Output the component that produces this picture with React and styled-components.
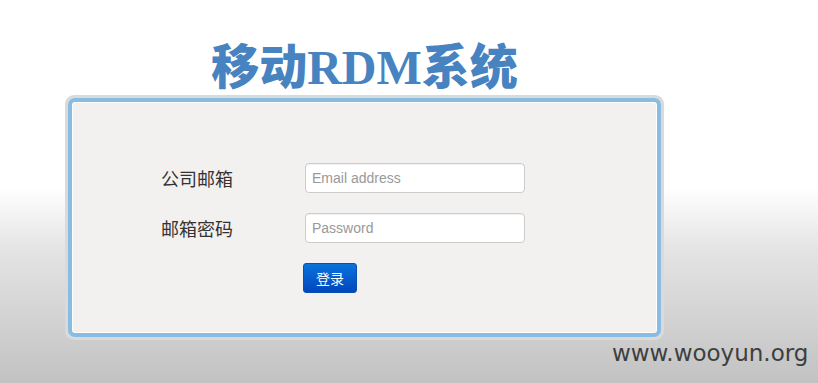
import React from 'react';
import styled, { createGlobalStyle } from 'styled-components';

const GlobalStyle = createGlobalStyle`
  html, body {
    margin: 0;
    padding: 0;
  }
  body {
    font-family: "Liberation Sans", Arial, "Noto Sans CJK SC", sans-serif;
  }
`;

const Page = styled.div`
  position: relative;
  width: 818px;
  height: 383px;
  overflow: hidden;
  background: linear-gradient(to bottom, #ffffff 0px, #ffffff 188px, #e4e4e4 250px, #c2c2c2 383px);
  padding: 36px 0 0 65px;
  box-sizing: border-box;
`;

const Column = styled.div`
  width: 599px;
  display: flex;
  flex-direction: column;
`;

const Title = styled.h1`
  margin: 0 0 5px;
  height: 54px;
  line-height: 54px;
  text-align: center;
  font-size: 48px;
  font-weight: bold;
  color: #4683c0;
  font-family: "Liberation Serif", "Noto Sans CJK SC", serif;
`;

const Han = styled.span`
  font-family: "Noto Sans CJK SC", sans-serif;
  font-weight: 900;
`;

const Frame = styled.div`
  border: 3px solid #dadada;
  border-radius: 9px;
  background: #dadada;
`;

const Panel = styled.div`
  border: 4px solid #89bce2;
  border-radius: 7px;
  background: #f2f1ef;
  box-shadow: inset 0 0 0 1px #ffffff;
  box-sizing: border-box;
  height: 239px;
  padding: 61px 0 0 89px;
`;

const Form = styled.form`
  display: grid;
  grid-template-columns: 144px 220px;
  grid-auto-rows: 30px;
  row-gap: 20px;
  align-items: center;
  margin: 0;
`;

const Label = styled.label`
  font-family: "Noto Sans CJK SC", sans-serif;
  font-size: 18px;
  color: #333333;
`;

const Input = styled.input`
  box-sizing: border-box;
  width: 220px;
  height: 30px;
  padding: 4px 6px;
  border: 1px solid #cccccc;
  border-radius: 4px;
  background: #ffffff;
  font-family: "Liberation Sans", Arial, sans-serif;
  font-size: 14px;
  color: #555;
  box-shadow: inset 0 1px 1px rgba(0, 0, 0, 0.06);
  outline: none;

  &::placeholder {
    color: #999999;
  }
`;

const Button = styled.button`
  grid-column: 2;
  justify-self: start;
  margin-left: -2px;
  width: 54px;
  height: 30px;
  border: 1px solid #0a4fb0;
  border-radius: 3px;
  background: linear-gradient(to bottom, #0b72dc, #0047bf);
  color: #ffffff;
  font-family: "Noto Sans CJK SC", sans-serif;
  font-size: 14px;
  cursor: pointer;
`;

const Watermark = styled.div`
  position: absolute;
  left: 612px;
  top: 340px;
  font-family: "DejaVu Sans", Verdana, sans-serif;
  font-size: 23px;
  color: #333333;
  opacity: 0.92;
`;

export default function App() {
  return (
    <>
      <GlobalStyle />
      <Page>
        <Column>
          <Title>
            <Han>移动</Han>RDM<Han>系统</Han>
          </Title>
          <Frame>
            <Panel>
              <Form onSubmit={(e) => e.preventDefault()}>
                <Label htmlFor="email">公司邮箱</Label>
                <Input id="email" type="email" placeholder="Email address" />
                <Label htmlFor="password">邮箱密码</Label>
                <Input id="password" type="password" placeholder="Password" />
                <Button type="submit">登录</Button>
              </Form>
            </Panel>
          </Frame>
        </Column>
        <Watermark>www.wooyun.org</Watermark>
      </Page>
    </>
  );
}
